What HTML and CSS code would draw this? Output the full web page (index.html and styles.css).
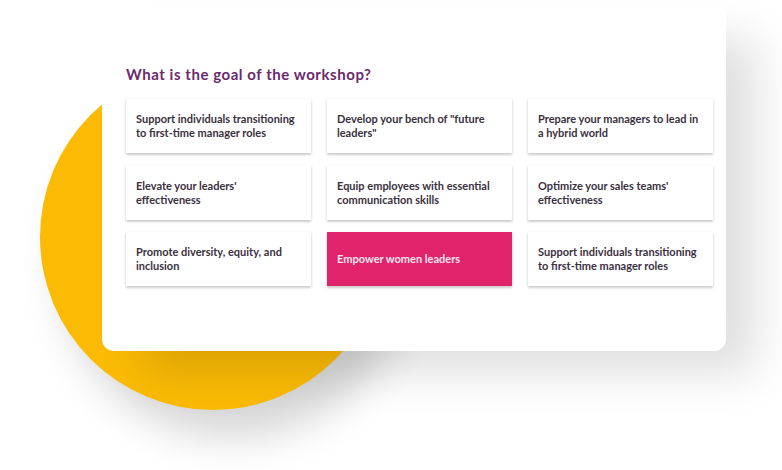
FILE: index.html
```html
<!DOCTYPE html>
<html lang="en">
<head>
<meta charset="utf-8">
<title>Workshop goal</title>
<link rel="stylesheet" href="styles.css">
</head>
<body>
<div class="stage">
  <div class="blob"></div>
  <section class="panel">
    <h2 class="title">What is the goal of the workshop?</h2>
    <div class="options">
      <div class="option">Support individuals transitioning to first-time manager roles</div>
      <div class="option">Develop your bench of "future leaders"</div>
      <div class="option">Prepare your managers to lead in a hybrid world</div>
      <div class="option">Elevate your leaders' effectiveness</div>
      <div class="option">Equip employees with essential communication skills</div>
      <div class="option">Optimize your sales teams' effectiveness</div>
      <div class="option">Promote diversity, equity, and inclusion</div>
      <div class="option active">Empower women leaders</div>
      <div class="option">Support individuals transitioning to first-time manager roles</div>
    </div>
  </section>
</div>
</body>
</html>
```

FILE: styles.css
```css
html, body {
  margin: 0;
  padding: 0;
  background: #ffffff;
}
.stage {
  position: relative;
  width: 782px;
  height: 470px;
  overflow: hidden;
  padding-top: 4px;
  box-sizing: border-box;
  font-family: "Lato", "Open Sans", sans-serif;
}
.blob {
  position: absolute;
  left: 40px;
  top: 64px;
  width: 346px;
  height: 346px;
  border-radius: 50%;
  background: #fbbb05;
  box-shadow: 20px 28px 40px rgba(0, 0, 0, 0.16);
}
.panel {
  position: relative;
  margin-left: 102px;
  width: 624px;
  height: 347px;
  box-sizing: border-box;
  padding: 60px 14px 0 24px;
  background: #ffffff;
  border-radius: 12px;
  box-shadow: 36px 28px 46px -6px rgba(0, 0, 0, 0.13);
}
.title {
  margin: 0;
  font-size: 15px;
  line-height: 20px;
  font-weight: 700;
  letter-spacing: 0.55px;
  color: #6c2a6e;
}
.options {
  margin-top: 15px;
  display: grid;
  grid-template-columns: 185px 185px 185px;
  grid-template-rows: 54px 55px 54px;
  column-gap: 16px;
  row-gap: 12px;
}
.option {
  display: flex;
  align-items: center;
  padding: 0 14px 0 10px;
  background: #ffffff;
  box-shadow: 0 1px 3px rgba(0, 0, 0, 0.14), 0 2px 2px rgba(0, 0, 0, 0.12);
  font-size: 11px;
  line-height: 14px;
  font-weight: 700;
  color: #3b3040;
}
.active {
  background: #e0236a;
  color: #fbe6ef;
}
```
